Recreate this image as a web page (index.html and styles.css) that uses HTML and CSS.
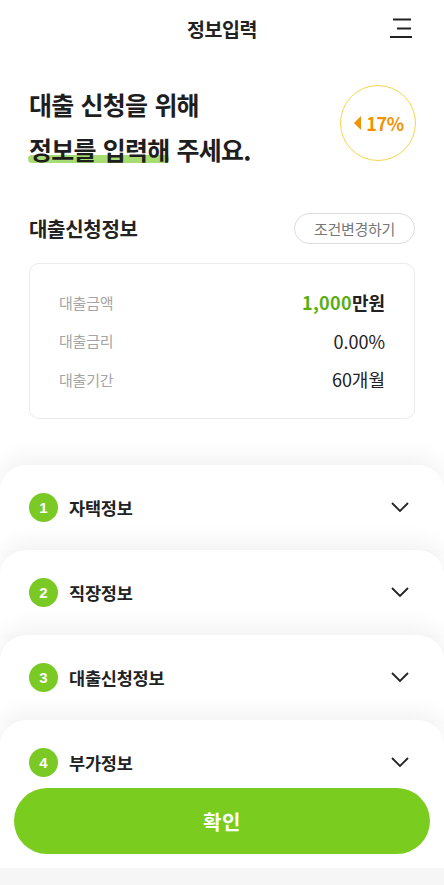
FILE: index.html
```html
<!DOCTYPE html>
<html lang="ko">
<head>
  <meta charset="utf-8">
  <title>정보입력</title>
  <link rel="stylesheet" href="styles.css">
</head>
<body>
  <header class="topbar">
    <span></span>
    <h1 class="topbar-title">정보입력</h1>
    <button class="menu-button" aria-label="메뉴">
      <svg width="22" height="20" viewBox="0 0 22 20">
        <path d="M3 1.5H21M7 10.5H21M0 19H22" stroke="#222" stroke-width="2" fill="none"/>
      </svg>
    </button>
  </header>

  <section class="intro">
    <h2 class="intro-title">대출 신청을 위해<br><span class="highlight">정보를 입력해</span> 주세요.</h2>
    <div class="progress-badge">
      <span class="progress-arrow"></span>
      <span class="progress-value">17%</span>
    </div>
  </section>

  <section class="summary">
    <div class="summary-head">
      <h3 class="summary-title">대출신청정보</h3>
      <button class="button-outline">조건변경하기</button>
    </div>
    <div class="card">
      <div class="card-row">
        <span class="card-label">대출금액</span>
        <span class="card-value strong"><em class="accent">1,000</em>만원</span>
      </div>
      <div class="card-row">
        <span class="card-label">대출금리</span>
        <span class="card-value">0.00%</span>
      </div>
      <div class="card-row">
        <span class="card-label">대출기간</span>
        <span class="card-value">60개월</span>
      </div>
    </div>
  </section>

  <section class="steps">
    <div class="step">
      <span class="step-num">1</span>
      <span class="step-name">자택정보</span>
      <svg class="step-chevron" width="20" height="12" viewBox="0 0 20 12"><path d="M2 2L10 10L18 2" stroke="#222" stroke-width="1.8" fill="none"/></svg>
    </div>
    <div class="step">
      <span class="step-num">2</span>
      <span class="step-name">직장정보</span>
      <svg class="step-chevron" width="20" height="12" viewBox="0 0 20 12"><path d="M2 2L10 10L18 2" stroke="#222" stroke-width="1.8" fill="none"/></svg>
    </div>
    <div class="step">
      <span class="step-num">3</span>
      <span class="step-name">대출신청정보</span>
      <svg class="step-chevron" width="20" height="12" viewBox="0 0 20 12"><path d="M2 2L10 10L18 2" stroke="#222" stroke-width="1.8" fill="none"/></svg>
    </div>
    <div class="step">
      <span class="step-num">4</span>
      <span class="step-name">부가정보</span>
      <svg class="step-chevron" width="20" height="12" viewBox="0 0 20 12"><path d="M2 2L10 10L18 2" stroke="#222" stroke-width="1.8" fill="none"/></svg>
    </div>
  </section>

  <footer class="bottom-bar">
    <div class="bottom-inner">
      <button class="button-primary">확인</button>
    </div>
    <div class="safe-area"></div>
  </footer>
</body>
</html>
```

FILE: styles.css
```css
/* Reset */
* {
  margin: 0;
  padding: 0;
  box-sizing: border-box;
  font-family: "Noto Sans CJK KR", "Noto Sans", sans-serif;
}

body {
  width: 444px;
  height: 885px;
  overflow: hidden;
  background-color: #ffffff;
  color: #222222;
}

button {
  border: none;
  background: none;
  cursor: pointer;
}

/* Top bar */
.topbar {
  display: grid;
  grid-template-columns: 1fr auto 1fr;
  align-items: center;
  height: 56px;
}

.topbar-title {
  font-size: 19.5px;
  font-weight: 700;
  letter-spacing: -0.4px;
  color: #222222;
}

.menu-button {
  justify-self: end;
  margin-right: 32px;
  width: 22px;
  height: 20px;
  display: flex;
}

/* Intro */
.intro {
  display: flex;
  justify-content: space-between;
  align-items: flex-start;
  padding: 26px 28px 0 29px;
}

.intro-title {
  font-size: 25px;
  font-weight: 700;
  line-height: 45px;
  letter-spacing: -0.8px;
  word-spacing: 1px;
  color: #1e1e1e;
}

.highlight {
  position: relative;
  z-index: 0;
}

.highlight::after {
  content: '';
  position: absolute;
  left: -1px;
  right: 0;
  bottom: 4px;
  height: 8px;
  border-radius: 4px;
  background-color: #a7dc73;
  z-index: -1;
}

.progress-badge {
  display: flex;
  align-items: center;
  justify-content: center;
  gap: 5px;
  width: 76px;
  height: 76px;
  margin-top: 3px;
  border: 1.5px solid #f6d54c;
  border-radius: 50%;
  padding-left: 2px;
}

.progress-arrow {
  width: 0;
  height: 0;
  border-top: 7px solid transparent;
  border-bottom: 7px solid transparent;
  border-right: 7px solid #f39200;
}

.progress-value {
  font-size: 18px;
  font-weight: 700;
  color: #f39200;
  letter-spacing: -0.3px;
}

/* Summary */
.summary {
  padding: 41px 29px 0 29px;
}

.summary-head {
  display: flex;
  justify-content: space-between;
  align-items: center;
  height: 31px;
}

.summary-title {
  font-size: 20px;
  font-weight: 700;
  letter-spacing: -0.3px;
  color: #222222;
}

.button-outline {
  width: 121px;
  height: 31px;
  border: 1px solid #dddddd;
  border-radius: 16px;
  font-size: 15px;
  color: #777777;
  letter-spacing: -0.3px;
}

.card {
  margin-top: 19px;
  padding: 19px 29px 19px 29px;
  border: 1px solid #ebebeb;
  border-radius: 10px;
}

.card-row {
  display: flex;
  justify-content: space-between;
  align-items: center;
  height: 38.5px;
}

.card-label {
  font-size: 15px;
  color: #a5a5a5;
  letter-spacing: -0.2px;
}

.card-value {
  font-size: 18px;
  color: #222222;
}

.card-value.strong {
  font-weight: 700;
}

.accent {
  font-style: normal;
  color: #5aae14;
  letter-spacing: 0.3px;
}

/* Steps */
.steps {
  margin-top: 46px;
}

.step {
  display: flex;
  align-items: center;
  height: 85px;
  padding: 0 34px 0 29px;
  background-color: #ffffff;
  border-radius: 26px 26px 0 0;
  box-shadow: 0 -8px 22px rgba(0, 0, 0, 0.055);
}

.step-num {
  display: flex;
  align-items: center;
  justify-content: center;
  width: 29px;
  height: 29px;
  border-radius: 50%;
  background-color: #7bc925;
  color: #ffffff;
  font-family: "Liberation Sans", Arial, sans-serif;
  font-size: 15px;
  font-weight: 700;
}

.step-name {
  flex: 1;
  margin-left: 11px;
  font-size: 17.5px;
  font-weight: 700;
  letter-spacing: -0.2px;
  color: #222222;
}

/* Bottom bar */
.bottom-bar {
  position: fixed;
  left: 0;
  right: 0;
  bottom: 0;
}

.bottom-inner {
  padding: 0 14px 14px 14px;
  background-color: #ffffff;
}

.button-primary {
  width: 100%;
  height: 66px;
  border-radius: 33px;
  background-color: #7acc1f;
  color: #ffffff;
  font-size: 20px;
  font-weight: 700;
  letter-spacing: 0.5px;
}

.safe-area {
  height: 17px;
  background-color: #f6f6f6;
}
```
